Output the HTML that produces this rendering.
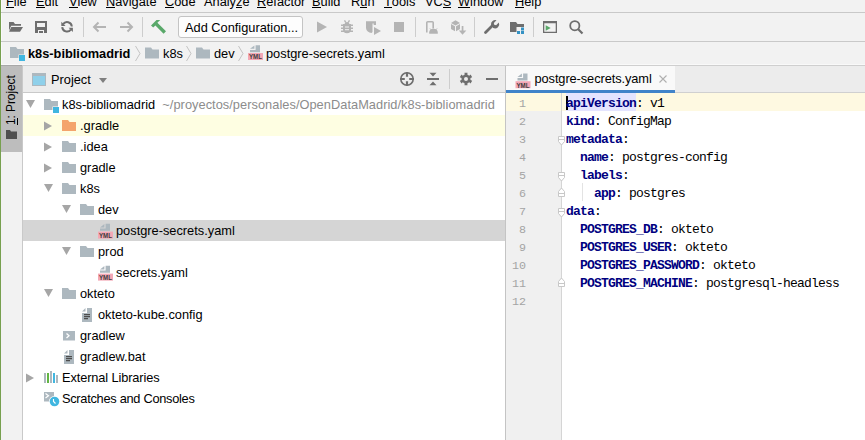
<!DOCTYPE html>
<html><head><meta charset="utf-8">
<style>
*{margin:0;padding:0;box-sizing:border-box}
html,body{width:865px;height:440px;overflow:hidden;background:#f2f2f2;font-family:"Liberation Sans",sans-serif;font-size:12.8px;color:#000}
.a{position:absolute}
.t{position:absolute;white-space:nowrap;line-height:21px;height:21px}
.hl{position:absolute;height:1px;background:#c9c9c9}
.vl{position:absolute;width:1px;background:#c9c9c9}
u{text-decoration:none;position:relative}
u:after{content:"";position:absolute;left:0;right:0;top:13px;height:1px;background:#000}
svg.ic{position:absolute;left:0;top:0;width:865px;height:440px;overflow:visible}
.mono{font-family:"Liberation Mono",monospace;font-size:13px;letter-spacing:-0.8px}
.kw{color:#000080;font-weight:bold}
.ln{position:absolute;left:506px;width:20px;padding-top:2px;text-align:right;color:#a4a4a4;font-family:"Liberation Mono",monospace;font-size:11.7px;line-height:18px;height:18px}
.cl{position:absolute;left:566px;line-height:18px;height:18px;white-space:pre;padding-top:2px}
</style></head><body>
<!-- green left edge -->
<div class="a" style="left:0;top:0;width:1px;height:440px;background:#77a04f"></div><div class="a" style="left:1px;top:0;width:1px;height:64px;background:#f9f9f9"></div>

<!-- menu bar -->
<div class="t" style="left:6px;top:-9px"><u>F</u>ile</div>
<div class="t" style="left:36px;top:-9px"><u>E</u>dit</div>
<div class="t" style="left:69px;top:-9px"><u>V</u>iew</div>
<div class="t" style="left:106px;top:-9px"><u>N</u>avigate</div>
<div class="t" style="left:165px;top:-9px"><u>C</u>ode</div>
<div class="t" style="left:204px;top:-9px">Analy<u>z</u>e</div>
<div class="t" style="left:257px;top:-9px"><u>R</u>efactor</div>
<div class="t" style="left:312px;top:-9px"><u>B</u>uild</div>
<div class="t" style="left:351px;top:-9px">R<u>u</u>n</div>
<div class="t" style="left:384px;top:-9px"><u>T</u>ools</div>
<div class="t" style="left:425px;top:-9px">VC<u>S</u></div>
<div class="t" style="left:458px;top:-9px"><u>W</u>indow</div>
<div class="t" style="left:515px;top:-9px"><u>H</u>elp</div>
<div class="hl" style="left:1px;top:12px;width:864px"></div>

<!-- toolbar -->
<div class="hl" style="left:1px;top:41px;width:864px"></div>
<div class="a" style="left:178px;top:16px;width:125px;height:22px;border:1px solid #c4c4c4;border-radius:3px;background:#fdfdfd"></div>
<div class="t" style="left:185px;top:17px">Add Configuration...</div>

<!-- breadcrumbs -->
<div class="t" style="left:28px;top:43px;font-weight:bold">k8s-bibliomadrid</div>
<div class="t" style="left:163px;top:43px">k8s</div>
<div class="t" style="left:214px;top:43px">dev</div>
<div class="t" style="left:266px;top:43px">postgre-secrets.yaml</div>
<div class="a" style="left:1px;top:64px;width:864px;height:1px;background:#f9f9f9"></div><div class="hl" style="left:1px;top:65px;width:864px;background:#cfcfcf"></div><div class="hl" style="left:1px;top:65px;width:21px;background:#a8a8a8"></div>

<!-- left stripe -->
<div class="a" style="left:1px;top:66px;width:21px;height:86px;background:#bdbdbd"></div>
<div class="vl" style="left:22px;top:66px;height:374px"></div>
<div class="a" style="left:1px;top:125px;width:60px;height:21px;transform-origin:0 0;transform:rotate(-90deg)"><div class="t" style="left:0px;top:0px;font-size:12px;letter-spacing:-0.1px"><u>1</u>: Project</div></div>

<!-- project panel header -->
<div class="a" style="left:23px;top:66px;width:482px;height:26px;background:#ececec"></div>
<div class="t" style="left:51px;top:69px">Project</div>
<div class="hl" style="left:23px;top:92px;width:482px"></div>
<div class="a" style="left:23px;top:93px;width:482px;height:347px;background:#fff"></div>
<div class="vl" style="left:505px;top:66px;height:374px;background:#c4c4c4"></div>

<!-- tree -->
<div class="a" style="left:23px;top:115px;width:482px;height:21px;background:#fefee2"></div>
<div class="a" style="left:23px;top:220px;width:482px;height:21px;background:#d5d5d5"></div>
<div class="t" style="left:62px;top:94px">k8s-bibliomadrid <span style="color:#8c8c8c;letter-spacing:0.04px">&nbsp;~/proyectos/personales/OpenDataMadrid/k8s-bibliomadrid</span></div>
<div class="t" style="left:80px;top:115px">.gradle</div>
<div class="t" style="left:80px;top:136px">.idea</div>
<div class="t" style="left:80px;top:157px">gradle</div>
<div class="t" style="left:80px;top:178px">k8s</div>
<div class="t" style="left:98px;top:199px">dev</div>
<div class="t" style="left:116px;top:220px">postgre-secrets.yaml</div>
<div class="t" style="left:98px;top:241px">prod</div>
<div class="t" style="left:116px;top:262px">secrets.yaml</div>
<div class="t" style="left:80px;top:283px">okteto</div>
<div class="t" style="left:98px;top:304px">okteto-kube.config</div>
<div class="t" style="left:80px;top:325px">gradlew</div>
<div class="t" style="left:80px;top:346px">gradlew.bat</div>
<div class="t" style="left:62px;top:367px;letter-spacing:-0.12px">External Libraries</div>
<div class="t" style="left:62px;top:388px;letter-spacing:-0.28px">Scratches and Consoles</div>

<!-- editor -->
<div class="a" style="left:506px;top:66px;width:359px;height:27px;background:#ececec"></div><div class="hl" style="left:675px;top:92px;width:190px;background:#d0d0d0"></div>
<div class="a" style="left:506px;top:66px;width:169px;height:27px;background:#f9f9f9"></div>
<div class="a" style="left:506px;top:90px;width:169px;height:3px;background:#4083c9"></div>
<div class="t" style="left:534.5px;top:68px;letter-spacing:-0.08px">postgre-secrets.yaml</div>
<div class="a" style="left:506px;top:93px;width:359px;height:347px;background:#fff"></div>
<div class="a" style="left:506px;top:93px;width:55px;height:347px;background:#f0f0f0"></div>
<div class="a" style="left:506px;top:93px;width:359px;height:18px;background:#fef9e1"></div>
<div class="a" style="left:566px;top:93px;width:70px;height:18px;background:#e4e4ff"></div>
<div class="vl" style="left:561px;top:93px;height:347px;background:#d5d5d5"></div>
<div class="a" style="left:566px;top:96px;width:2px;height:14px;background:#000"></div>

<div class="ln" style="top:93px">1</div>
<div class="ln" style="top:111px">2</div>
<div class="ln" style="top:129px">3</div>
<div class="ln" style="top:147px">4</div>
<div class="ln" style="top:165px">5</div>
<div class="ln" style="top:183px">6</div>
<div class="ln" style="top:201px">7</div>
<div class="ln" style="top:219px">8</div>
<div class="ln" style="top:237px">9</div>
<div class="ln" style="top:255px">10</div>
<div class="ln" style="top:273px">11</div>
<div class="ln" style="top:291px">12</div>

<div class="cl mono" style="top:93px"><span class="kw">apiVersion</span>: v1</div>
<div class="cl mono" style="top:111px"><span class="kw">kind</span>: ConfigMap</div>
<div class="cl mono" style="top:129px"><span class="kw">metadata</span>:</div>
<div class="cl mono" style="top:147px">  <span class="kw">name</span>: postgres-config</div>
<div class="cl mono" style="top:165px">  <span class="kw">labels</span>:</div>
<div class="cl mono" style="top:183px">    <span class="kw">app</span>: postgres</div>
<div class="cl mono" style="top:201px"><span class="kw">data</span>:</div>
<div class="cl mono" style="top:219px">  <span class="kw">POSTGRES_DB</span>: okteto</div>
<div class="cl mono" style="top:237px">  <span class="kw">POSTGRES_USER</span>: okteto</div>
<div class="cl mono" style="top:255px">  <span class="kw">POSTGRES_PASSWORD</span>: okteto</div>
<div class="cl mono" style="top:273px">  <span class="kw">POSTGRES_MACHINE</span>: postgresql-headless</div>

<svg class="ic" viewBox="0 0 865 440">
<path fill="#6e6e6e" d="M9 22h4.5l1.5 2H21v1.7H11.2L9 30.5z"/>
<path fill="#6e6e6e" d="M11.3 27H23l-3 4.8H9z"/>
<path fill="#6e6e6e" fill-rule="evenodd" d="M35 21h12v12H35zM37 23v4h8v-4zM38 30v3h6v-3z"/>
<rect x="39" y="31" width="4" height="2" fill="#6e6e6e"/>
<path d="M63.1 24.1A4.8 4.8 0 0 1 71.8 26.5M70.9 29.5A4.8 4.8 0 0 1 62.2 27.1" fill="none" stroke="#6e6e6e" stroke-width="2"/><path fill="#6e6e6e" d="M61.3 21.7V26h4.3z"/><path fill="#6e6e6e" d="M72.9 32V27.7h-4.3z"/>
<rect x="142" y="17" width="1" height="20" fill="#cdcdcd"/>
<rect x="415" y="17" width="1" height="20" fill="#cdcdcd"/>
<rect x="474" y="17" width="1" height="20" fill="#cdcdcd"/>
<rect x="533" y="17" width="1" height="20" fill="#cdcdcd"/>
<rect x="83" y="17" width="1" height="20" fill="#cdcdcd"/>
<path d="M94 27h12M98.5 22.5L94 27l4.5 4.5" fill="none" stroke="#b4b4b4" stroke-width="2"/>
<path d="M120 27h12M127.5 22.5L132 27l-4.5 4.5" fill="none" stroke="#b4b4b4" stroke-width="2"/>
<path fill="#59a869" d="M151 25.5L156.5 20H160.2L157.4 22.8L166 31.2L163.6 33.8L155.4 25.4L153.2 27.5z"/>
<path fill="#b4b4b4" d="M317 21.5l10 5.5-10 5.5z"/>
<path fill="#b4b4b4" d="M344.5 24.2a2.5 2.3 0 0 1 5 0zM343 24h8v5.5a4 3.8 0 0 1-8 0z"/><path d="M341 25.2h12M341 28.3h12M341 31.3h12M344.5 20.3l1.3 2.2M349.5 20.3l-1.3 2.2" stroke="#b4b4b4" stroke-width="1.4"/><rect x="345" y="26.5" width="4" height="1" fill="#f2f2f2"/><rect x="345" y="29.2" width="4" height="1" fill="#f2f2f2"/>
<path fill="#b4b4b4" d="M366 21.3h10v3.8h-2.3v-1.6h-1.2v8.5l-1 1a5.5 5.5 0 0 1-5.5-5z"/><path fill="#b4b4b4" d="M374 27l7 4-7 4z"/>
<rect x="394" y="22" width="10" height="10" fill="#b4b4b4"/>
<path d="M426.8 32.6V22.6q0-0.9 0.9-0.9h4.6q0.9 0 0.9 0.9V28.5" fill="none" stroke="#b4b4b4" stroke-width="1.6"/>
<path fill="#b4b4b4" d="M429.2 33.8v-1.3a4.3 3.8 0 0 1 8.6 0v1.3z"/><path d="M430 28.5l1 1.2M437 28.5l-1 1.2" stroke="#b4b4b4" stroke-width="1"/>
<path fill="#b4b4b4" d="M451 23l4.5-2.8L460 23l-4.5 2.6z"/><path fill="#b4b4b4" d="M451 24v5l4 2.3v-5z"/><path fill="#b4b4b4" d="M456 26.3v5l4-2.3v-5z"/>
<rect x="461.7" y="26" width="1.7" height="5" fill="#b4b4b4"/><path fill="#b4b4b4" d="M458.8 30.6h7.5l-3.75 4.2z"/>
<path d="M485.5 32.5l7-7" stroke="#6e6e6e" stroke-width="2.8" stroke-linecap="round"/>
<path fill="#6e6e6e" d="M491 24.5a4.2 4.2 0 0 1 5.5-4.3l-2.7 2.7 0.4 1.9 1.9 0.4 2.7-2.7a4.2 4.2 0 0 1-5.6 5.6z"/>
<path fill="#6e6e6e" d="M510 22h6l1.5 2H524v3h-7.5v5H510z"/>
<rect x="521" y="27.5" width="3" height="3" fill="#3592c4"/>
<rect x="517" y="31" width="3" height="3" fill="#3592c4"/>
<rect x="521" y="31" width="3" height="3" fill="#3592c4"/>
<path fill="#6e6e6e" fill-rule="evenodd" d="M543 21h14v12H543zM544.3 23.3v8.4h11.4v-8.4z"/>
<path fill="#59a869" d="M545.7 25.3l5 2.7-5 2.7z"/>
<circle cx="574.8" cy="25.7" r="4.6" fill="none" stroke="#6e6e6e" stroke-width="1.8"/>
<path d="M578 29l4.5 4.5" stroke="#6e6e6e" stroke-width="2.2"/>
<path fill="#adb8bf" d="M10 47h6l1.5 2H24v9H10z"/>
<rect x="18.5" y="54.5" width="7" height="7" fill="#f2f2f2"/><rect x="19" y="55" width="6" height="6" fill="#40b6e0"/>
<path fill="#adb8bf" d="M145 47.5h6l1.5 2H159v9H145z"/>
<path fill="#adb8bf" d="M196 47.5h6l1.5 2H210v9H196z"/>
<path d="M135.5 46l4.5 7.5-4.5 7.5" fill="none" stroke="#c4c4c4" stroke-width="1"/>
<path d="M186.5 46l4.5 7.5-4.5 7.5" fill="none" stroke="#c4c4c4" stroke-width="1"/>
<path d="M238.5 46l4.5 7.5-4.5 7.5" fill="none" stroke="#c4c4c4" stroke-width="1"/>
<path fill="#adb8bf" d="M250.0 48.8l4.4-3.4V48.8z"/><path fill="#adb8bf" d="M255.6 45.2H260.0v7H250.0v-2.3h5.6z"/><rect x="248" y="53" width="15" height="7" fill="#f4a7b5"/><text x="255.5" y="59.3" font-family="Liberation Sans" font-size="7.2" font-weight="bold" fill="#3c3c3c" text-anchor="middle" textLength="13" lengthAdjust="spacingAndGlyphs">YML</text>
<path fill="#4f4f4f" d="M6 130h4l1 1.5h6v7.5H6z"/>
<rect x="32" y="73" width="14" height="13" fill="#adb8bf"/><rect x="33" y="76" width="12" height="9" fill="#8fd0ea"/>
<path fill="#7f7f7f" d="M99 78h8l-4 5z"/>
<circle cx="407" cy="79" r="6.2" fill="none" stroke="#6e6e6e" stroke-width="1.6"/>
<path d="M407 72v4.8M407 81.2V86M400 79h4.8M409.2 79H414" stroke="#6e6e6e" stroke-width="2.2"/>
<path fill="#6e6e6e" d="M429.5 72.8h7l-3.5 3.6z M429.5 85.2h7l-3.5-3.6z"/><rect x="427" y="78" width="12" height="2" fill="#6e6e6e"/>
<rect x="449" y="69" width="1" height="20" fill="#cdcdcd"/>
<path fill="#6e6e6e" fill-rule="evenodd" d="M464.45 72.79L467.55 72.79L467.27 74.58L469.20 75.69L470.60 74.55L472.15 77.24L470.46 77.89L470.46 80.11L472.15 80.76L470.60 83.45L469.20 82.31L467.27 83.42L467.55 85.21L464.45 85.21L464.73 83.42L462.80 82.31L461.40 83.45L459.85 80.76L461.54 80.11L461.54 77.89L459.85 77.24L461.40 74.55L462.80 75.69L464.73 74.58z M468 79a2 2 0 1 0-4 0a2 2 0 1 0 4 0z"/>
<rect x="486" y="78" width="12" height="2" fill="#6e6e6e"/>
<path fill="#adb8bf" d="M517.5 77l4.4-3.4V77z"/><path fill="#adb8bf" d="M523.1 73.4H527.5v7H517.5v-2.3h5.6z"/><rect x="515.5" y="81.2" width="15" height="7" fill="#f4a7b5"/><text x="523" y="87.5" font-family="Liberation Sans" font-size="7.2" font-weight="bold" fill="#3c3c3c" text-anchor="middle" textLength="13" lengthAdjust="spacingAndGlyphs">YML</text>
<path d="M659.5 75.5l7 7M666.5 75.5l-7 7" stroke="#b0b0b0" stroke-width="1.1"/>
<path d="M558.5 136.5h6v5l-3 3.5-3-3.5z" fill="#fff" stroke="#c8c8c8" stroke-width="1"/><path d="M558.5 139.5h6" stroke="#c8c8c8" stroke-width="1"/>
<path d="M558.5 172.5h6v5l-3 3.5-3-3.5z" fill="#fff" stroke="#c8c8c8" stroke-width="1"/><path d="M558.5 175.5h6" stroke="#c8c8c8" stroke-width="1"/>
<path d="M558.5 196.5h-0v-5l3-3.5 3 3.5v5z" fill="#fff" stroke="#c8c8c8" stroke-width="1"/><path d="M558.5 193.5h6" stroke="#c8c8c8" stroke-width="1"/>
<path d="M558.5 208.5h6v5l-3 3.5-3-3.5z" fill="#fff" stroke="#c8c8c8" stroke-width="1"/><path d="M558.5 211.5h6" stroke="#c8c8c8" stroke-width="1"/>
<path d="M558.5 286.5h-0v-5l3-3.5 3 3.5v5z" fill="#fff" stroke="#c8c8c8" stroke-width="1"/><path d="M558.5 283.5h6" stroke="#c8c8c8" stroke-width="1"/>
<rect x="582" y="183" width="1" height="18" fill="#e3e3e3"/>
<path fill="#a6a6a6" d="M26 100h9l-4.5 8z"/>
<path fill="#adb8bf" d="M44 99h6l1.5 2H58v9H44z"/>
<rect x="52.5" y="106.5" width="7" height="7" fill="#fff"/><rect x="53" y="107" width="6" height="6" fill="#40b6e0"/>
<path fill="#a6a6a6" d="M44 121.5l8 4.5l-8 4.5z"/>
<path fill="#f4a46c" d="M62 120h6l1.5 2H76v9H62z"/>
<path fill="#a6a6a6" d="M44 142.5l8 4.5l-8 4.5z"/>
<path fill="#adb8bf" d="M62 141h6l1.5 2H76v9H62z"/>
<path fill="#a6a6a6" d="M44 163.5l8 4.5l-8 4.5z"/>
<path fill="#adb8bf" d="M62 162h6l1.5 2H76v9H62z"/>
<path fill="#a6a6a6" d="M44 184h9l-4.5 8z"/>
<path fill="#adb8bf" d="M62 183h6l1.5 2H76v9H62z"/>
<path fill="#a6a6a6" d="M62 205h9l-4.5 8z"/>
<path fill="#adb8bf" d="M80 204h6l1.5 2H94v9H80z"/>
<path fill="#adb8bf" d="M100.0 227.4l4.4-3.4V227.4z"/><path fill="#adb8bf" d="M105.6 223.79999999999998H110.0v7H100.0v-2.3h5.6z"/><rect x="98" y="231.6" width="15" height="7" fill="#f4a7b5"/><text x="105.5" y="237.9" font-family="Liberation Sans" font-size="7.2" font-weight="bold" fill="#3c3c3c" text-anchor="middle" textLength="13" lengthAdjust="spacingAndGlyphs">YML</text>
<path fill="#a6a6a6" d="M62 247h9l-4.5 8z"/>
<path fill="#adb8bf" d="M80 246h6l1.5 2H94v9H80z"/>
<path fill="#adb8bf" d="M100.0 269.40000000000003l4.4-3.4V269.40000000000003z"/><path fill="#adb8bf" d="M105.6 265.8H110.0v7H100.0v-2.3h5.6z"/><rect x="98" y="273.6" width="15" height="7" fill="#f4a7b5"/><text x="105.5" y="279.90000000000003" font-family="Liberation Sans" font-size="7.2" font-weight="bold" fill="#3c3c3c" text-anchor="middle" textLength="13" lengthAdjust="spacingAndGlyphs">YML</text>
<path fill="#a6a6a6" d="M44 289h9l-4.5 8z"/>
<path fill="#adb8bf" d="M62 288h6l1.5 2H76v9H62z"/>
<path fill="#adb8bf" d="M82 311.5l3.5-3.5v3.5z"/><path fill="#adb8bf" d="M87 308h5v14H82V313h5z"/><path fill="#4d4d4d" d="M84 314h6v1.2H84zM84 316h6v1.2H84zM84 318h4v1.2H84z"/>
<rect x="63" y="331" width="12" height="9.5" fill="#adb8bf"/><path d="M66.5 333.5l2.5 2.3-2.5 2.3" fill="none" stroke="#fff" stroke-width="1.3"/>
<path fill="#adb8bf" d="M64 353.5l3.5-3.5v3.5z"/><path fill="#adb8bf" d="M69 350h5v14H64V355h5z"/><path fill="#4d4d4d" d="M66 356h6v1.2H66zM66 358h6v1.2H66zM66 360h4v1.2H66z"/>
<path fill="#a6a6a6" d="M26 373.5l8 4.5l-8 4.5z"/>
<rect x="44" y="373" width="2" height="10" fill="#adb8bf"/><rect x="47" y="373" width="2" height="10" fill="#62b543"/><rect x="50" y="371" width="2" height="12" fill="#adb8bf"/><rect x="53" y="373" width="2" height="10" fill="#40b6e0"/><rect x="56" y="375" width="2" height="8" fill="#adb8bf"/>
<path fill="#adb8bf" d="M44 392h10v5.5a5 5 0 0 0-4.5 4H44z"/><path d="M45.5 393.5l3 2.3-3 2.3" fill="none" stroke="#fff" stroke-width="1.2"/>
<circle cx="54.5" cy="401.5" r="5.5" fill="#fff"/><circle cx="54.5" cy="401.5" r="4.8" fill="#40b6e0"/><path d="M53.5 399v2.5l2 2" fill="none" stroke="#fff" stroke-width="1.1"/>
</svg>
</body></html>
